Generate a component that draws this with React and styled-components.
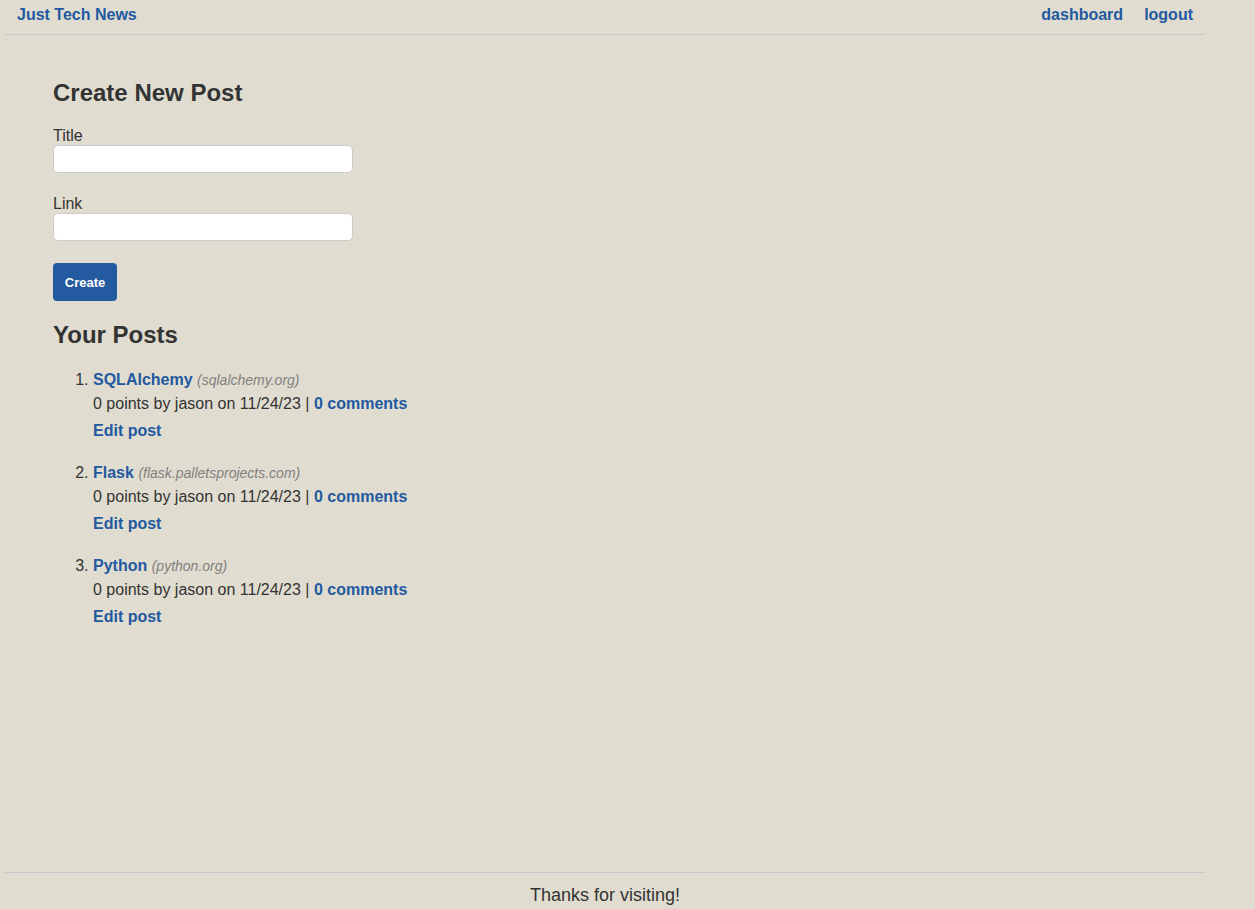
import React from 'react'
import styled, { createGlobalStyle } from 'styled-components'

const posts = [
  { id: 1, title: 'SQLAlchemy', domain: 'sqlalchemy.org' },
  { id: 2, title: 'Flask', domain: 'flask.palletsprojects.com' },
  { id: 3, title: 'Python', domain: 'python.org' }
]

const App = () => {
  return (
    <>
      <GlobalStyle />
      <Page>
        <Header>
          <Brand href='#'>Just Tech News</Brand>
          <Nav>
            <NavLink href='#'>dashboard</NavLink>
            <NavLink href='#'>logout</NavLink>
          </Nav>
        </Header>

        <Main>
          <Heading>Create New Post</Heading>
          <PostForm onSubmit={e => e.preventDefault()}>
            <Field>
              <Label htmlFor='post-title'>Title</Label>
              <Input id='post-title' type='text' />
            </Field>
            <Field>
              <Label htmlFor='post-url'>Link</Label>
              <Input id='post-url' type='text' />
            </Field>
            <Button type='submit'>Create</Button>
          </PostForm>

          <Heading>Your Posts</Heading>
          <PostList>
            {posts.map(post => (
              <PostItem key={post.id}>
                <div>
                  <PostLink href='#'>{post.title}</PostLink>{' '}
                  <Domain>({post.domain})</Domain>
                </div>
                <div>
                  0 points by jason on 11/24/23 |{' '}
                  <PostLink href='#'>0 comments</PostLink>
                </div>
                <EditLink href='#'>Edit post</EditLink>
              </PostItem>
            ))}
          </PostList>
        </Main>

        <Footer>Thanks for visiting!</Footer>
      </Page>
    </>
  )
}

export default App

//styling

const GlobalStyle = createGlobalStyle`
  html, body {
    margin: 0;
    padding: 0;
    background-color: #e0ddd0;
  }
  body {
    font-family: 'Liberation Sans', Arial, sans-serif;
    color: #333;
  }
`

const Page = styled.div`
  width: 1200px;
  margin: 0 5px;
  min-height: 100vh;
  display: flex;
  flex-direction: column;
`

const Header = styled.header`
  display: flex;
  justify-content: space-between;
  align-items: flex-start;
  box-sizing: border-box;
  height: 35px;
  padding: 6px 12px 0;
  border-bottom: 1px solid #c9c9cc;
`

const Brand = styled.a`
  color: #2359a0;
  font-weight: bold;
  font-size: 16px;
  line-height: 18px;
  text-decoration: none;
`

const Nav = styled.nav`
  display: flex;
  gap: 21px;
`

const NavLink = styled.a`
  color: #2359a0;
  font-weight: bold;
  font-size: 16px;
  line-height: 18px;
  text-decoration: none;
`

const Main = styled.main`
  flex: 1;
  padding: 44px 48px 20px;
`

const Heading = styled.h2`
  font-size: 24px;
  line-height: 28px;
  margin: 0;
  color: #333;
`

const PostForm = styled.form`
  display: flex;
  flex-direction: column;
  align-items: flex-start;
  margin: 20px 0;
`

const Field = styled.div`
  display: flex;
  flex-direction: column;
  margin-bottom: 22px;
`

const Label = styled.label`
  font-size: 16px;
  line-height: 18px;
`

const Input = styled.input`
  width: 300px;
  height: 28px;
  box-sizing: border-box;
  border: 1px solid #ccc;
  border-radius: 5px;
  background: #fff;
  padding: 4px 8px;
  font-size: 14px;
`

const Button = styled.button`
  width: 64px;
  height: 38px;
  border: none;
  border-radius: 4px;
  background-color: #235aa0;
  color: #fff;
  font-family: 'Liberation Sans', Arial, sans-serif;
  font-weight: bold;
  font-size: 13px;
  cursor: pointer;
`

const PostList = styled.ol`
  margin: 19px 0 0;
  padding-left: 40px;
  font-size: 16px;
`

const PostItem = styled.li`
  line-height: 24px;
  margin-bottom: 18px;
`

const PostLink = styled.a`
  color: #2359a0;
  font-weight: bold;
  text-decoration: none;
`

const Domain = styled.span`
  color: #808080;
  font-style: italic;
  font-size: 14px;
`

const EditLink = styled(PostLink)`
  display: block;
  margin-top: 3px;
`

const Footer = styled.footer`
  border-top: 1px solid #c9c9cc;
  text-align: center;
  font-size: 18px;
  line-height: 21px;
  padding: 12px 0 3px;
`
